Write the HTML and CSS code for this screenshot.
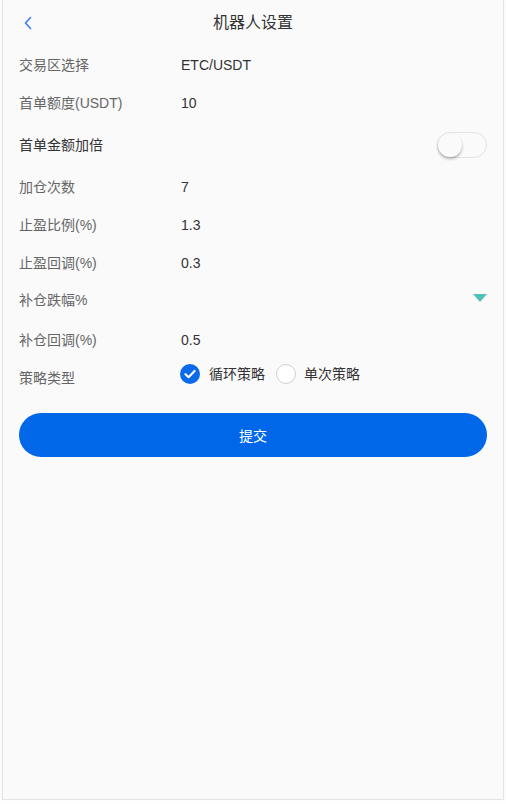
FILE: index.html
```html
<!DOCTYPE html>
<html lang="zh-CN">
<head>
<meta charset="utf-8">
<title>机器人设置</title>
<link rel="stylesheet" href="styles.css">
</head>
<body>
<div class="frame">
  <header class="nav">
    <span class="back">
      <svg width="10" height="14" viewBox="0 0 10 14"><path d="M7.5 1.5 L2.5 7 L7.5 12.5" fill="none" stroke="#3a7cf4" stroke-width="1.6" stroke-linecap="round" stroke-linejoin="round"/></svg>
    </span>
    <h1 class="title">机器人设置</h1>
  </header>
  <main class="form">
    <div class="row">
      <span class="label">交易区选择</span>
      <span class="value">ETC/USDT</span>
    </div>
    <div class="row">
      <span class="label">首单额度(USDT)</span>
      <span class="value">10</span>
    </div>
    <div class="row row-switch">
      <span class="label label-dark">首单金额加倍</span>
      <span class="switch"><span class="knob"></span></span>
    </div>
    <div class="row">
      <span class="label">加仓次数</span>
      <span class="value">7</span>
    </div>
    <div class="row">
      <span class="label">止盈比例(%)</span>
      <span class="value">1.3</span>
    </div>
    <div class="row">
      <span class="label">止盈回调(%)</span>
      <span class="value">0.3</span>
    </div>
    <div class="row row-select">
      <span class="label">补仓跌幅%</span>
      <span class="arrow"></span>
    </div>
    <div class="row row-tall">
      <span class="label">补仓回调(%)</span>
      <span class="value">0.5</span>
    </div>
    <div class="row row-radio">
      <span class="label label-radio">策略类型</span>
      <div class="radios">
        <span class="radio">
          <span class="dot dot-on">
            <svg width="20" height="20" viewBox="0 0 20 20"><path d="M5.5 10.2 L8.6 13.2 L14.6 7" fill="none" stroke="#fff" stroke-width="2.2" stroke-linecap="round" stroke-linejoin="round"/></svg>
          </span>
          <span class="radio-text">循环策略</span>
        </span>
        <span class="radio">
          <span class="dot"></span>
          <span class="radio-text">单次策略</span>
        </span>
      </div>
    </div>
    <button class="submit" type="button">提交</button>
  </main>
</div>
</body>
</html>
```
FILE: styles.css
```css
* { box-sizing: border-box; }
html, body { margin: 0; padding: 0; }
body {
  background: #fefefe;
  font-family: "Liberation Sans", "Noto Sans CJK SC", sans-serif;
  font-size: 14px;
  color: #333;
}
.frame {
  margin: 0 2px;
  height: 800px;
  background: #fafafa;
  border: 1px solid #e4e4e4;
  border-top: none;
  box-shadow: 0 1px 3px rgba(0,0,0,0.06);
}
.nav {
  height: 46px;
  display: flex;
  align-items: center;
  justify-content: center;
  position: relative;
}
.back {
  position: absolute;
  left: 20px;
  top: 16px;
  width: 10px;
  height: 14px;
  display: block;
}
.back svg { display: block; }
.title {
  margin: 0;
  font-size: 16px;
  font-weight: normal;
  color: #333;
  line-height: 22px;
  margin-top: -1px;
}
.form {
  padding: 0 16px;
}
.row {
  height: 38px;
  display: flex;
  align-items: center;
}
.label {
  width: 162px;
  flex: none;
  color: #666;
  line-height: 20px;
}
.label-dark { color: #333; }
.value {
  color: #333;
  line-height: 20px;
}
.row-switch {
  height: 46px;
  justify-content: space-between;
}
.switch {
  width: 50px;
  height: 26px;
  border: 1px solid #e2e2e2;
  border-radius: 13px;
  background: #fafafa;
  position: relative;
  display: block;
}
.knob {
  position: absolute;
  left: 0;
  top: 0;
  width: 24px;
  height: 24px;
  border-radius: 50%;
  background: #fafafa;
  box-shadow: 0 2px 3px rgba(0,0,0,0.28);
}
.row-select {
  height: 36px;
  justify-content: space-between;
}
.arrow {
  width: 0;
  height: 0;
  border-left: 7px solid transparent;
  border-right: 7px solid transparent;
  border-top: 8px solid #4fc2b4;
  margin-top: -4px;
}
.row-tall { height: 44px; }
.row-radio {
  height: 30px;
  align-items: flex-start;
}
.label-radio { margin-top: 6px; }
.radios {
  display: flex;
  align-items: center;
  height: 24px;
}
.radio {
  display: flex;
  align-items: center;
  margin-right: 12px;
}
.dot {
  width: 20px;
  height: 20px;
  border-radius: 50%;
  border: 1px solid #d0d0d0;
  background: #fff;
  margin-left: -1px;
  margin-right: 8px;
  display: block;
}
.dot-on {
  border: none;
  background: #0a6ae8;
  margin-right: 9px;
}
.dot-on svg { display: block; }
.radio-text { color: #333; line-height: 20px; }
.submit {
  display: block;
  width: 100%;
  height: 44px;
  margin-top: 21px;
  border: none;
  border-radius: 22px;
  background: #0068e8;
  color: #fff;
  font-family: inherit;
  font-size: 14px;
  padding: 0;
}
```
